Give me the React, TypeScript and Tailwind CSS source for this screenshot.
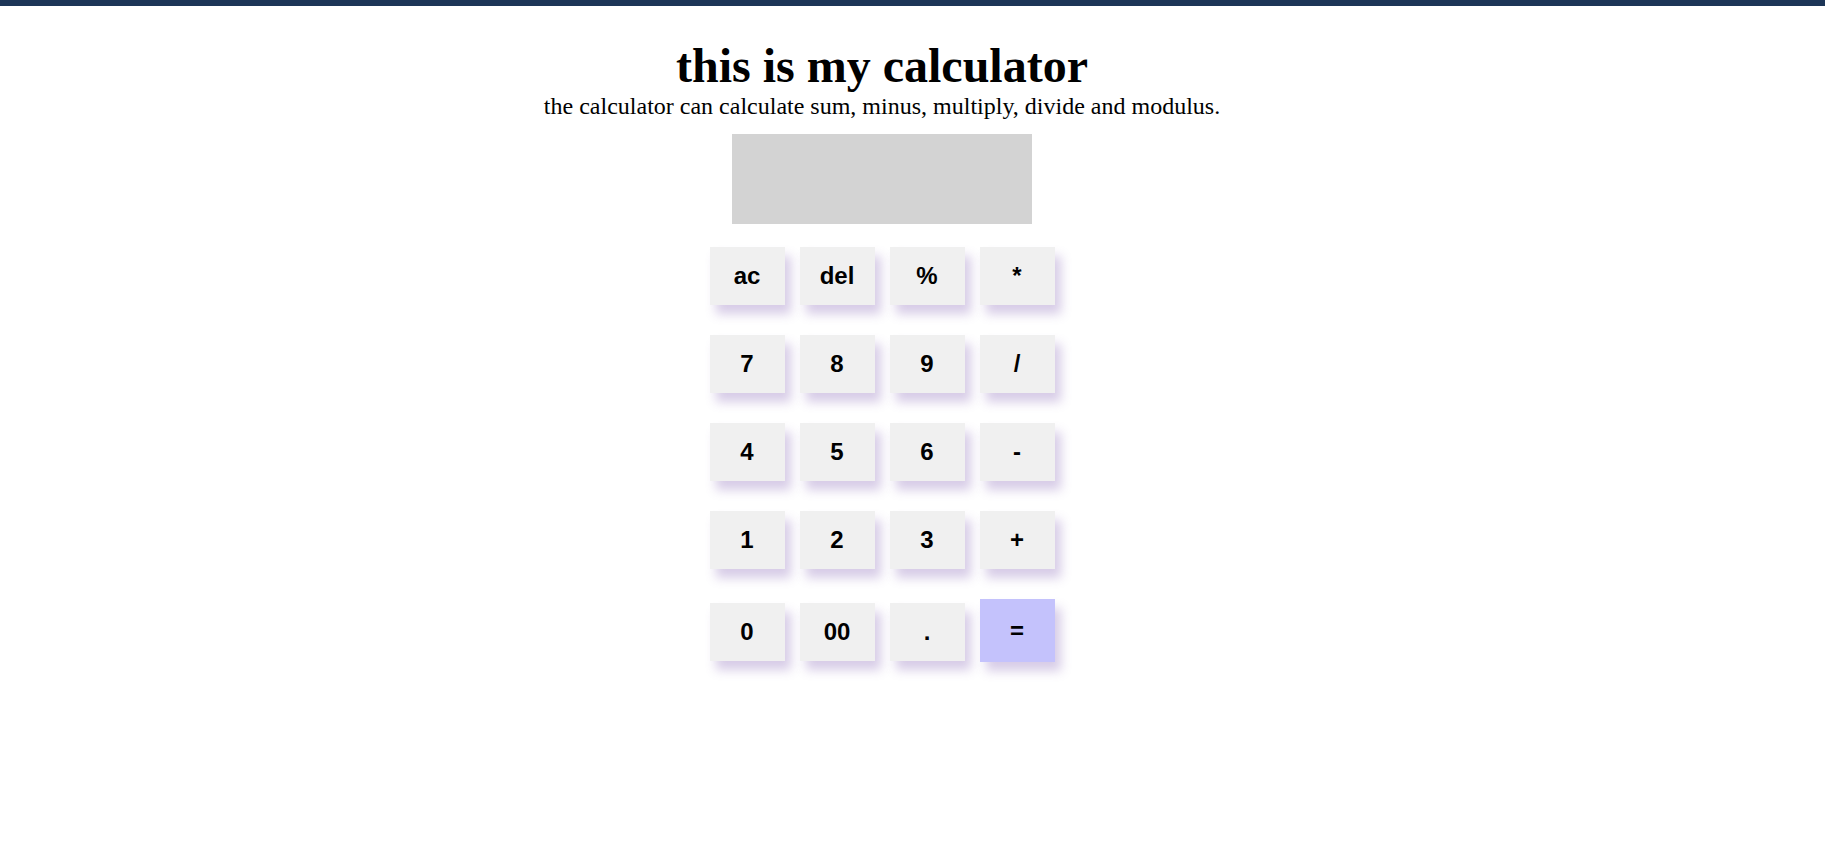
import React from "react";

const rows: string[][] = [
  ["ac", "del", "%", "*"],
  ["7", "8", "9", "/"],
  ["4", "5", "6", "-"],
  ["1", "2", "3", "+"],
];

const btn =
  "w-[75px] h-[58px] bg-[#f0f0f0] text-black text-[24px] font-bold shadow-[6px_9px_10px_rgba(130,95,180,0.32)] flex items-center justify-center";

export default function App() {
  return (
    <div className="min-h-[860px] bg-white" style={{ fontFamily: '"Liberation Serif", serif' }}>
      <div className="h-[6px] bg-[#1d3557]" />
      <div className="w-[1764px] flex flex-col items-center">
        <h1 className="mt-[32px] text-[48px] font-bold leading-[55px] text-black">this is my calculator</h1>
        <p className="text-[24px] leading-[27px] text-black">
          the calculator can calculate sum, minus, multiply, divide and modulus.
        </p>
        <div className="mt-[14px] w-[300px] h-[90px] bg-[#d3d3d3]" />
        <div
          className="mt-[23px] flex flex-col gap-[30px]"
          style={{ fontFamily: '"Liberation Sans", Arial, sans-serif' }}
        >
          {rows.map((r, i) => (
            <div key={i} className="flex gap-[15px]">
              {r.map((k) => (
                <button key={k} className={btn}>
                  {k}
                </button>
              ))}
            </div>
          ))}
          <div className="flex gap-[15px] items-start">
            {["0", "00", "."].map((k) => (
              <button key={k} className={btn + " mt-[4px]"}>
                {k}
              </button>
            ))}
            <button className="w-[75px] h-[63px] bg-[#c4c2fc] text-black text-[24px] font-bold shadow-[6px_9px_10px_rgba(130,95,180,0.32)] flex items-center justify-center">
              =
            </button>
          </div>
        </div>
      </div>
    </div>
  );
}
